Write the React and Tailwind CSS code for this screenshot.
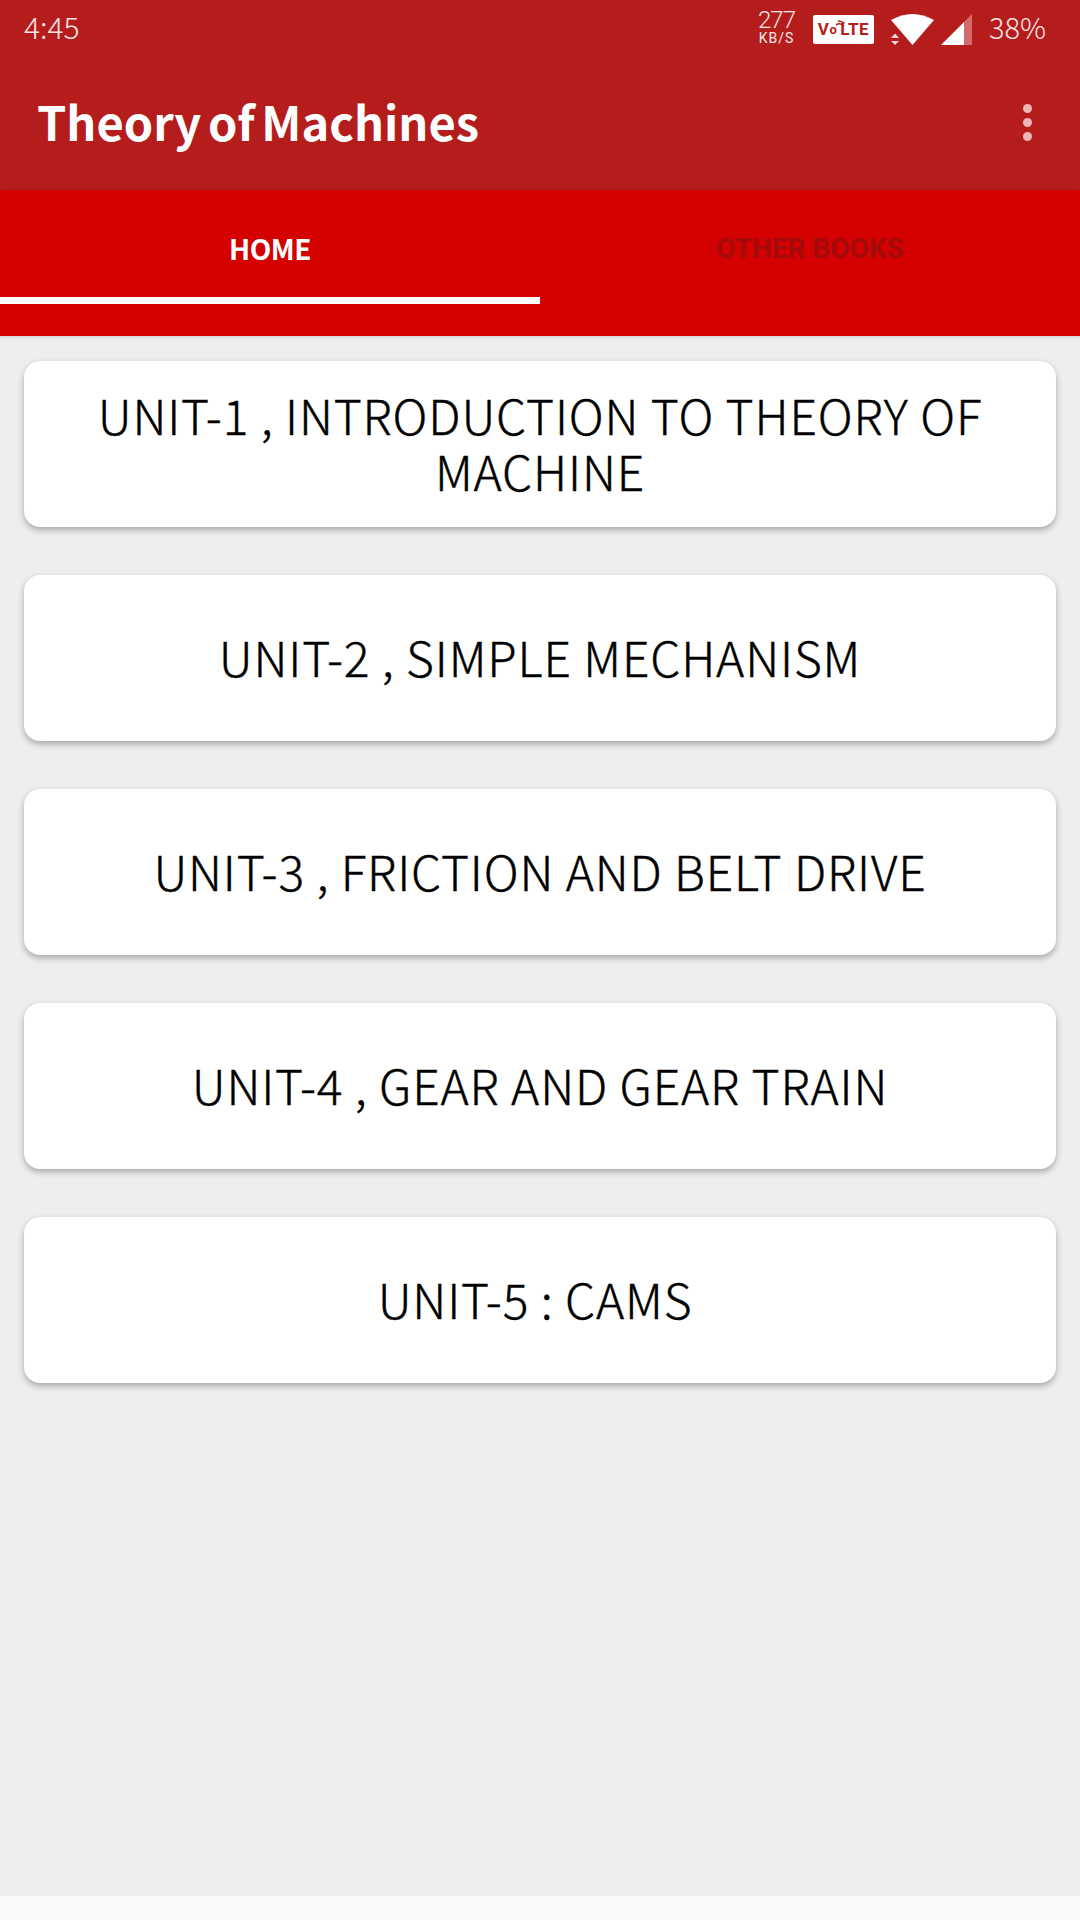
const units = [
  ["UNIT-1 , INTRODUCTION TO THEORY OF MACHINE", ""],
  ["UNIT-2 , SIMPLE MECHANISM", ""],
  ["UNIT-3 , FRICTION AND BELT DRIVE", ""],
  ["UNIT-4 , GEAR AND GEAR TRAIN", ""],
  ["UNIT-5 : CAMS", "pr-[10px]"],
];
const cjk = "font-['Noto_Sans_CJK_SC','Noto_Sans',sans-serif]";

export default function App() {
  return (
    <div className={`w-[1080px] h-[1920px] flex flex-col bg-[#eeeeee] overflow-hidden ${cjk}`}>
      <div className="h-[190px] bg-[#b51c1c] flex flex-col shrink-0">
        <div className="h-[55px] flex items-center pl-[24px] pr-[35px] text-white">
          <span className="text-[30px] font-light text-[#f8e4e4] leading-none -mt-[4px]">4:45</span>
          <div className="ml-auto flex items-center">
            <div className="flex flex-col items-center mr-[18px] font-['Roboto',sans-serif] text-[#fbeaea] -mt-[1px]">
              <span className="text-[24px] font-light leading-[22px] tracking-[-1px]">277</span>
              <span className="text-[14px] leading-[14px] tracking-[1px]">KB/S</span>
            </div>
            <div className="relative w-[61px] h-[29px] mr-[17px] bg-white rounded-[2px] flex items-center justify-center font-['Roboto',sans-serif] font-bold text-[17px] leading-none text-[#b51c1c] tracking-[0.5px] mt-[4px]">
              V<span className="text-[13px] mr-[3px]">o</span>LTE
              <svg width="10" height="10" viewBox="0 0 10 10" className="absolute left-[22px] top-[5px]" fill="none" stroke="#b51c1c" strokeWidth="1.6">
                <path d="M1 5 Q5 2 9 6" />
                <path d="M3 1 Q7 1 9.5 3.5" />
              </svg>
            </div>
            <svg width="43" height="31" viewBox="0 0 43 31" className="mr-[7px] mt-[4px]">
              <path d="M0 6 Q21.5 -6 43 6 L21.5 31 Z" fill="#fff" />
              <path d="M0 24 L4 19.5 L8 24 Z M0 27 L8 27 L4 31 Z" fill="#b51c1c" stroke="#b51c1c" strokeWidth="2" />
              <path d="M0 24 L4 19.5 L8 24 Z M0 27 L8 27 L4 31 Z" fill="#f6d6d6" />
            </svg>
            <svg width="31" height="31" viewBox="0 0 31 31" className="mr-[17px] mt-[4px]">
              <path d="M0 31 L23 8 L23 31 Z" fill="#fff" />
              <path d="M23 8 L31 0 L31 31 L23 31 Z" fill="#d26a6a" />
            </svg>
            <span className="text-[29px] font-light text-[#f8e4e4] leading-none -mt-[3px] -mr-[1px]">38%</span>
          </div>
        </div>
        <div className="flex-1 flex items-center pl-[37px] pr-[48px]">
          <span className="text-[47px] font-bold text-white leading-none -mt-[4px] [word-spacing:-4px]">Theory of Machines</span>
          <div className="ml-auto flex flex-col gap-[5px] -mt-[1px]">
            <div className="w-[9px] h-[9px] rounded-full bg-[#efb7b7]" />
            <div className="w-[9px] h-[9px] rounded-full bg-[#efb7b7]" />
            <div className="w-[9px] h-[9px] rounded-full bg-[#efb7b7]" />
          </div>
        </div>
      </div>
      <div className="h-[146px] bg-[#d50000] flex shrink-0 shadow-[0_1px_3px_rgba(0,0,0,0.15)]">
        <div className="w-[540px] h-[114px] flex items-center justify-center border-b-[7px] border-white pt-[8px]">
          <span className="text-[28px] font-bold text-white leading-none tracking-[-0.5px]">HOME</span>
        </div>
        <div className="w-[540px] h-[114px] flex items-center justify-center pt-[4px]">
          <span className="font-['Roboto',sans-serif] text-[28px] font-bold text-[#a30a0a] leading-none">OTHER BOOKS</span>
        </div>
      </div>
      <div className="flex-1 flex flex-col gap-[48px] px-[24px] pt-[25px]">
        {units.map(([t, extra]) => (
          <div key={t} className="h-[166px] bg-white rounded-[16px] shadow-[0_3px_6px_rgba(0,0,0,0.3)] flex items-center justify-center text-center px-[60px] pb-[5px]">
            <span className={`text-[48px] leading-[56px] font-light tracking-[0.85px] text-black [-webkit-text-stroke:0.4px_black] ${extra}`}>{t}</span>
          </div>
        ))}
      </div>
      <div className="h-[24px] bg-[#fafafa] shrink-0" />
    </div>
  );
}
